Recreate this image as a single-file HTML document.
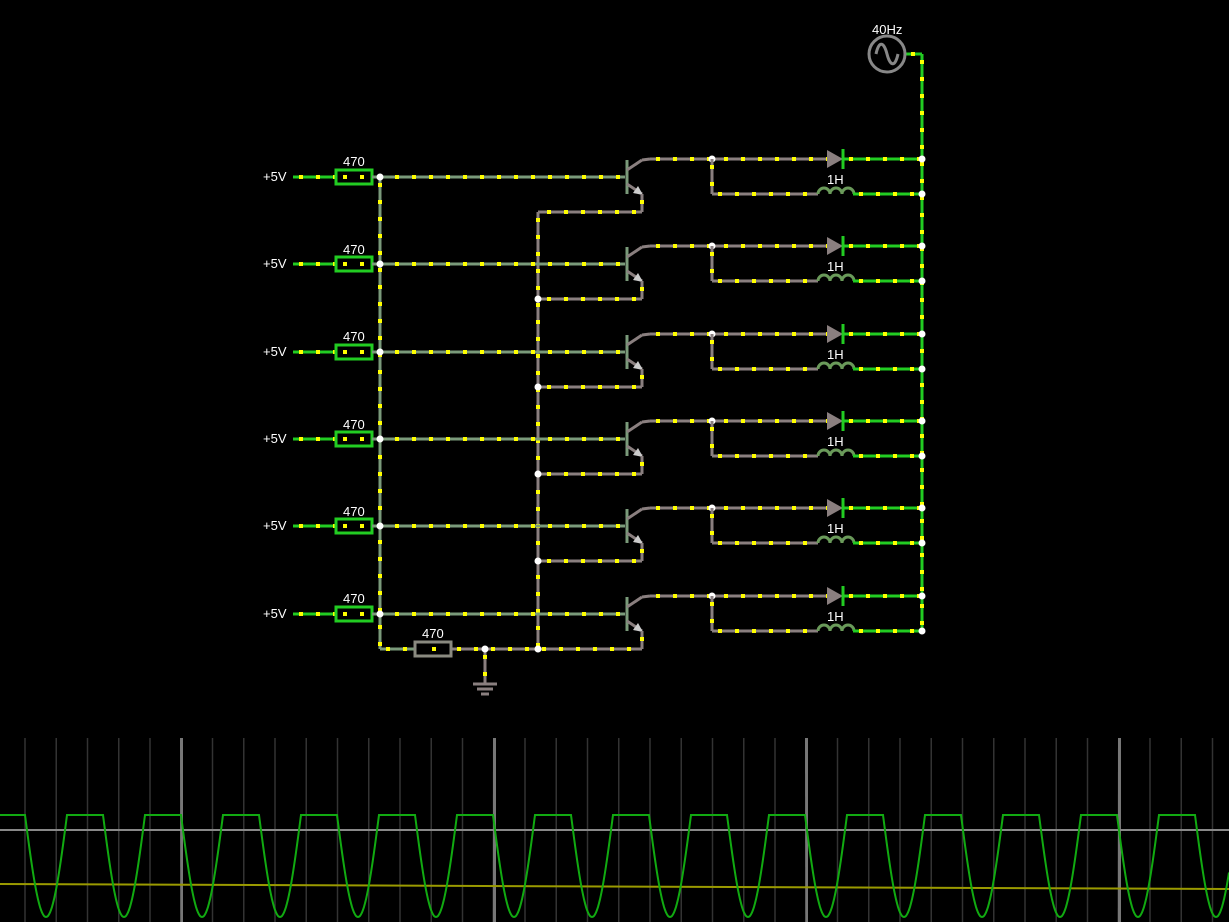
<!DOCTYPE html>
<html><head><meta charset="utf-8"><style>
html,body{margin:0;padding:0;background:#000;width:1229px;height:922px;overflow:hidden}
svg{display:block}
text{font-family:"Liberation Sans",sans-serif;font-size:13px;fill:#fff}
</style></head><body>
<svg id="s" width="1229" height="922" viewBox="0 0 1229 922" xmlns="http://www.w3.org/2000/svg">
<g id="scope"></g>
<g id="w"></g>
<g id="labels">
<text x="263" y="181">+5V</text><text x="263" y="268">+5V</text><text x="263" y="356">+5V</text>
<text x="263" y="443">+5V</text><text x="263" y="530">+5V</text><text x="263" y="618">+5V</text>
<text x="343" y="166">470</text><text x="343" y="254">470</text><text x="343" y="341">470</text>
<text x="343" y="429">470</text><text x="343" y="516">470</text><text x="343" y="603">470</text>
<text x="422" y="638">470</text>
<text x="827" y="184">1H</text><text x="827" y="271">1H</text><text x="827" y="359">1H</text>
<text x="827" y="446">1H</text><text x="827" y="533">1H</text><text x="827" y="621">1H</text>
<text x="872" y="34">40Hz</text>
</g>
</svg>
<script>
var NS="http://www.w3.org/2000/svg";
var W=document.getElementById('w'),S=document.getElementById('scope');
function el(p,t,a){var e=document.createElementNS(NS,t);for(var k in a)e.setAttribute(k,a[k]);p.appendChild(e);return e;}
var GR="#22cc22",BR="#8a7f7f",GG="#7a9a7a";
function wire(x1,y1,x2,y2,c,dots){el(W,'line',{x1:x1,y1:y1,x2:x2,y2:y2,stroke:c,'stroke-width':3});
 if(dots!==false)el(W,'line',{x1:x1,y1:y1,x2:x2,y2:y2,stroke:'#ffff00','stroke-width':4,'stroke-dasharray':'4 13','stroke-dashoffset':-6});}
function node(x,y){el(W,'circle',{cx:x,cy:y,r:3.5,fill:'#fff'});}
var rows=[177,264,352,439,526,614];
// buses
wire(380,177,380,649,GG);wire(538,212,538,649,BR);wire(922,54,922,631,GR);
wire(380,649,415,649,GG);wire(451,649,642,649,BR);wire(485,649,485,684,BR);
el(W,'line',{x1:473,y1:684,x2:497,y2:684,stroke:BR,'stroke-width':3});
el(W,'line',{x1:477,y1:689,x2:493,y2:689,stroke:BR,'stroke-width':3});
el(W,'line',{x1:481,y1:694,x2:489,y2:694,stroke:BR,'stroke-width':3});
el(W,'rect',{x:415,y:642,width:36,height:14,fill:'none',stroke:'#8a8a80','stroke-width':3});
el(W,'rect',{x:432,y:647,width:4,height:4,fill:'#ff0'});
node(485,649);node(538,649);
wire(905,54,922,54,GR);
el(W,'circle',{cx:887,cy:54,r:18,fill:'none',stroke:'#888','stroke-width':3});
el(W,'path',{d:'M876 54 C879 40 884 42 887 54 C890 66 895 68 898 54',fill:'none',stroke:'#888','stroke-width':3});
rows.forEach(function(y,i){
 wire(293,y,336,y,GR);
 el(W,'rect',{x:336,y:y-7,width:36,height:14,fill:'none',stroke:GR,'stroke-width':3});
 el(W,'rect',{x:343,y:y-2,width:4,height:4,fill:'#ff0'});el(W,'rect',{x:360,y:y-2,width:4,height:4,fill:'#ff0'});
 wire(372,y,625,y,GG);node(380,y);
 // transistor
 el(W,'line',{x1:627,y1:y-17,x2:627,y2:y+17,stroke:GG,'stroke-width':3});
 el(W,'line',{x1:627,y1:y-7,x2:642,y2:y-17,stroke:BR,'stroke-width':3});
 el(W,'line',{x1:627,y1:y+7,x2:642,y2:y+17,stroke:BR,'stroke-width':3});
 el(W,'path',{d:'M643 '+(y+18)+' l-10 -2 l5 -7 z',fill:'#ccc'});
 wire(642,y-17,650,y-18,BR,false);
 wire(650,y-18,828,y-18,BR);
 var ey=(i==5)?649:y+35;
 wire(642,y+17,642,ey,BR);
 if(i<5){wire(642,y+35,538,y+35,BR); if(i>0)node(538,y+35);}
 // diode
 el(W,'path',{d:'M827 '+(y-27)+' L843 '+(y-18)+' L827 '+(y-9)+' Z',fill:BR});
 el(W,'line',{x1:843,y1:y-28,x2:843,y2:y-8,stroke:GR,'stroke-width':3});
 wire(843,y-18,922,y-18,GR);node(712,y-18);node(922,y-18);
 wire(712,y-18,712,y+17,BR);wire(712,y+17,818,y+17,BR);
 el(W,'path',{d:'M818 '+(y+17)+' a6 6 0 0 1 12 0 a6 6 0 0 1 12 0 a6 6 0 0 1 12 0',fill:'none',stroke:'#6a9a5a','stroke-width':3});
 wire(853,y+17,922,y+17,GR);node(922,y+17);
});
// scope
for(var x=25;x<1229;x+=31.25){var b=[182,495,807,1120].some(function(v){return Math.abs(v-x)<8});
 el(S,'line',{x1:b?Math.round(x/312.5*312.5):x,y1:738,x2:x,y2:922,stroke:b?'#777':'#333','stroke-width':b?2:1.5});}
[182,495,807,1120].forEach(function(x){el(S,'line',{x1:x,y1:738,x2:x,y2:922,stroke:'#777','stroke-width':2});});
el(S,'line',{x1:0,y1:830,x2:1229,y2:830,stroke:'#888','stroke-width':2});
el(S,'line',{x1:0,y1:884,x2:1229,y2:889,stroke:'#9a9a00','stroke-width':2});
var d='M0 815';
for(var x=0;x<=1229;x++){var t=((x-25)%78+78)%78;var yy=815;if(t<42)yy=815+102*Math.sin(Math.PI*t/42);d+=' L'+x+' '+yy.toFixed(1);}
el(S,'path',{d:d,fill:'none',stroke:'#11aa11','stroke-width':2});
</script>
</body></html>
